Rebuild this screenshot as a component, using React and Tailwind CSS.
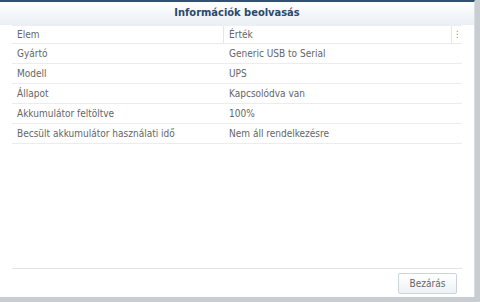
import React from 'react';

const rows = [
  ['Gyártó', 'Generic USB to Serial'],
  ['Modell', 'UPS'],
  ['Állapot', 'Kapcsolódva van'],
  ['Akkumulátor feltöltve', '100%'],
  ['Becsült akkumulátor használati idő', 'Nem áll rendelkezésre'],
];

export default function App() {
  return (
    <div className="w-[480px] h-[302px] bg-[#c9ccd0] flex flex-col overflow-hidden" style={{ fontFamily: '"DejaVu Sans Condensed", "DejaVu Sans", Verdana, sans-serif' }}>
      <div className="w-[475px] h-[297px] bg-white border-t-2 border-[#33506e] border-r border-r-[#d6dde4] flex flex-col">
        <div className="h-[23px] bg-gradient-to-b from-[#ffffff] to-[#e9eff4] flex items-center justify-center">
          <span className="text-[11px] font-bold text-[#2b4a6b]">Információk beolvasás</span>
        </div>
        <div className="flex-1 px-3 flex flex-col">
          <div className="flex h-[19px] items-center border-b border-[#eaeaea] border-t border-t-[#eeeeee] text-[10px] text-[#666]">
            <div className="w-[212px] pl-[5px] border-r border-[#e6e6e6] h-full flex items-center">Elem</div>
            <div className="flex-1 pl-[5px] h-full flex items-center">Érték</div>
            <div className="w-[11px] h-full border-l border-[#e6e6e6] flex items-center justify-center text-[9px] text-[#888]">⋮</div>
          </div>
          {rows.map(([k, v]) => (
            <div key={k} className="flex h-[20px] items-center border-b border-[#ececec] text-[10px] text-[#666]">
              <div className="w-[212px] pl-[5px]">{k}</div>
              <div className="flex-1 pl-[5px]">{v}</div>
            </div>
          ))}
          <div className="flex-1" />
          <div className="border-t border-[#e4e4e4] h-[29px] flex items-center justify-end pr-[5px]">
            <button className="w-[59px] h-[21px] border border-[#cdd3d8] rounded-[2px] bg-gradient-to-b from-[#ffffff] to-[#eef2f5] text-[10px] text-[#666]">
              Bezárás
            </button>
          </div>
        </div>
      </div>
    </div>
  );
}
